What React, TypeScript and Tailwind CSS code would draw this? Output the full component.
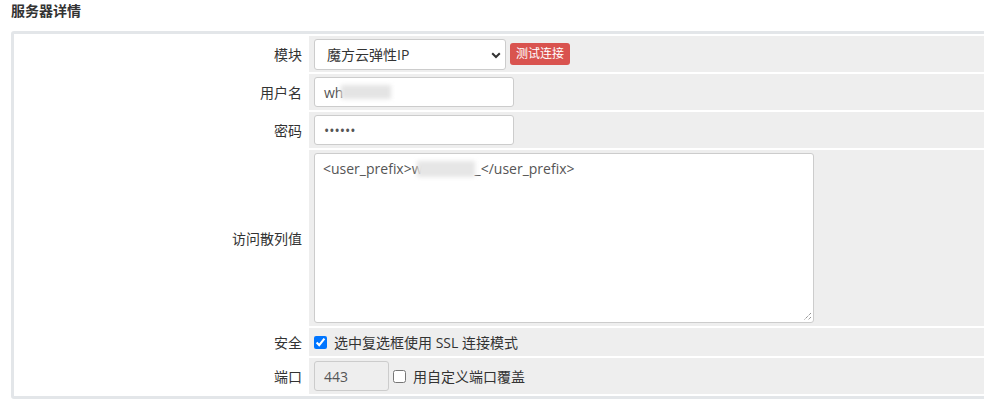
import React from "react";

const font = { fontFamily: '"Open Sans", "Noto Sans CJK SC", sans-serif' };

function Label({ children }: { children: React.ReactNode }) {
  return (
    <td className="w-[291px] pr-[5px] text-right align-middle text-[14px] text-[#333] p-0">
      {children}
    </td>
  );
}

function Cell({ children }: { children: React.ReactNode }) {
  return <td className="bg-[#eeeeee] pl-[5px] align-middle p-0">{children}</td>;
}

export default function App() {
  return (
    <div className="w-[984px] h-[409px] overflow-hidden bg-white text-[#333]" style={font}>
      <div className="h-[31px] pl-[11px] pt-[1px] text-[14px] leading-[20px] font-bold text-[#333]">
        服务器详情
      </div>
      <div className="ml-[11px] w-[990px] border-[3px] border-[#e3e6e9] rounded-[3px]">
        <table className="w-full border-separate border-spacing-[2px]">
          <tbody>
            <tr className="h-[36px]">
              <Label>模块</Label>
              <Cell>
                <div className="flex items-center">
                  <div className="relative flex h-[31px] w-[192px] items-center rounded-[3px] border border-[#cccccc] bg-white pl-[12px] text-[14px] text-[#333]">
                    魔方云弹性IP
                    <svg className="absolute right-[4px] top-[12px]" width="10" height="7" viewBox="0 0 10 7">
                      <path d="M1.2 1.2 L5 5 L8.8 1.2" fill="none" stroke="#333" strokeWidth="2" />
                    </svg>
                  </div>
                  <button className="ml-[4px] h-[22px] w-[60px] rounded-[3px] bg-[#d9534f] text-[12px] leading-[22px] text-white">
                    测试连接
                  </button>
                </div>
              </Cell>
            </tr>
            <tr className="h-[36px]">
              <Label>用户名</Label>
              <Cell>
                <div className="flex h-[30px] w-[200px] items-center rounded-[3px] border border-[#cccccc] bg-white pl-[9px] text-[14px] text-[#555]">
                  <span>wh</span>
                  <span className="ml-[-2px] h-[14px] w-[50px] bg-[#e4e4e4] blur-[2px]"></span>
                </div>
              </Cell>
            </tr>
            <tr className="h-[36px]">
              <Label>密码</Label>
              <Cell>
                <div className="flex h-[30px] w-[200px] items-center rounded-[3px] border border-[#cccccc] bg-white pl-[9px] text-[14px] text-[#555]">
                  ••••••
                </div>
              </Cell>
            </tr>
            <tr className="h-[176px]">
              <Label>访问散列值</Label>
              <Cell>
                <div className="relative h-[170px] w-[500px] rounded-[3px] border border-[#cccccc] bg-white pl-[8px] pt-[4px] text-[14px] text-[#555]">
                  <div className="flex items-center">
                    <span>&lt;user_prefix&gt;w</span>
                    <span className="ml-[-6px] h-[16px] w-[58px] bg-[#e6e6e6] blur-[2px]"></span>
                    <span>_&lt;/user_prefix&gt;</span>
                  </div>
                  <svg className="absolute bottom-[1px] right-[1px]" width="9" height="9" viewBox="0 0 9 9">
                    <path d="M8 1 L1 8 M8 5 L5 8" stroke="#666" strokeWidth="1" strokeDasharray="1 1" fill="none" />
                  </svg>
                </div>
              </Cell>
            </tr>
            <tr className="h-[28px]">
              <Label>安全</Label>
              <Cell>
                <label className="flex items-center text-[14px] text-[#333]">
                  <input type="checkbox" defaultChecked className="m-0 h-[13px] w-[13px] accent-[#0075ff]" />
                  <span className="ml-[7px]">选中复选框使用 SSL 连接模式</span>
                </label>
              </Cell>
            </tr>
            <tr className="h-[36px]">
              <Label>端口</Label>
              <Cell>
                <div className="flex items-center">
                  <div className="flex h-[30px] w-[75px] items-center rounded-[3px] border border-[#cccccc] bg-[#eeeeee] pl-[9px] text-[14px] text-[#555]">
                    443
                  </div>
                  <input type="checkbox" className="ml-[4px] m-0 h-[13px] w-[13px]" />
                  <span className="ml-[7px] text-[14px] text-[#333]">用自定义端口覆盖</span>
                </div>
              </Cell>
            </tr>
          </tbody>
        </table>
      </div>
    </div>
  );
}
